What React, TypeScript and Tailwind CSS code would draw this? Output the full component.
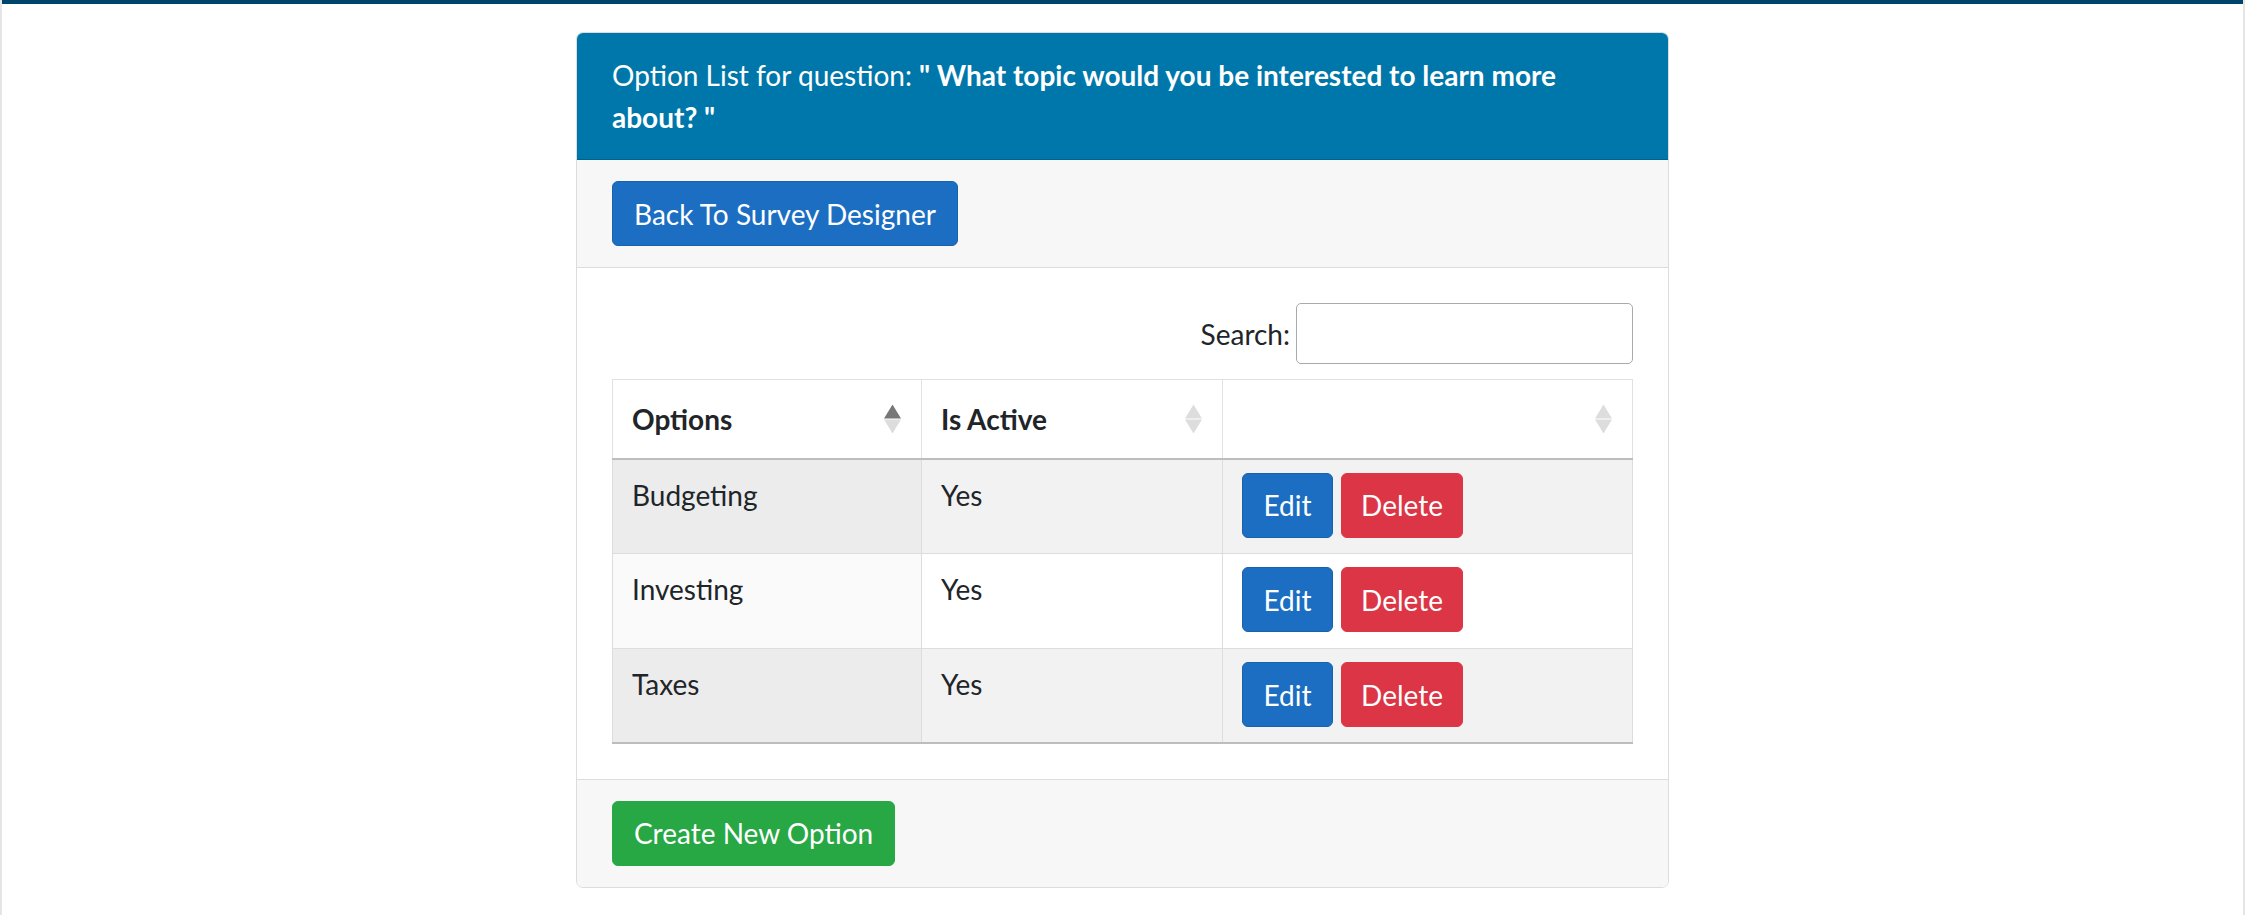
import React from 'react';

interface OptionRow {
  name: string;
  active: boolean;
}

const options: OptionRow[] = [
  { name: 'Budgeting', active: true },
  { name: 'Investing', active: true },
  { name: 'Taxes', active: true },
];

const SortIcon: React.FC<{ up?: boolean }> = ({ up }) => (
  <svg width="17" height="29" viewBox="0 0 17 29" className="absolute right-[20px] top-1/2 -translate-y-1/2">
    <path d="M8.5 0 L17 14 L0 14 Z" fill={up ? '#777777' : '#dddddd'} />
    <path d="M8.5 29 L17 15 L0 15 Z" fill="#dddddd" />
  </svg>
);

const App: React.FC = () => {
  return (
    <div className="min-h-[915px] bg-white text-[#212529] font-['Lato',sans-serif] text-[28px] leading-[42px] border-x-2 border-[#e5e5e5]">
      <div className="h-[4px] bg-[#00446e]" />

      <div className="mx-auto mt-[28px] w-[1093px] rounded-[7px] border border-[#dcdcdc] overflow-hidden">
        {/* Header */}
        <div className="bg-[#0077aa] text-white px-[35px] py-[21px] border-b border-[#00638f]">
          <span>Option List for question: </span>
          <b>" What topic would you be interested to learn more about? "</b>
        </div>

        {/* Top actions */}
        <div className="bg-[#f7f7f7] px-[35px] py-[21px] border-b border-[#dddddd]">
          <button className="h-[65px] px-[21px] rounded-[6px] bg-[#1b6ec2] border border-[#1861ac] text-white">
            Back To Survey Designer
          </button>
        </div>

        {/* Body */}
        <div className="bg-white p-[35px]">
          <div className="flex justify-end items-center">
            <label className="flex items-center">
              Search:
              <input className="ml-[6px] w-[337px] h-[61px] border border-[#aaaaaa] rounded-[5px] px-[8px] outline-none" />
            </label>
          </div>

          <table className="mt-[15px] w-full border-collapse">
            <thead>
              <tr className="h-[79px]">
                <th className="relative w-[309px] text-left font-bold pl-[19px] border border-[#dee2e6] border-b-2 border-b-[#bdbdbd]">
                  Options
                  <SortIcon up />
                </th>
                <th className="relative w-[301px] text-left font-bold pl-[19px] border border-[#dee2e6] border-b-2 border-b-[#bdbdbd]">
                  Is Active
                  <SortIcon />
                </th>
                <th className="relative text-left border border-[#dee2e6] border-b-2 border-b-[#bdbdbd]">
                  <SortIcon />
                </th>
              </tr>
            </thead>
            <tbody>
              {options.map((o, i) => {
                const odd = i % 2 === 0;
                const last = i === options.length - 1;
                return (
                  <tr key={o.name} className={last ? 'h-[94px]' : 'h-[95px]'}>
                    <td
                      className={`align-top pt-[14px] pl-[19px] border border-[#dddddd] ${odd ? 'bg-[#ececec]' : 'bg-[#fafafa]'} ${last ? 'border-b-2 border-b-[#bdbdbd]' : ''}`}
                    >
                      {o.name}
                    </td>
                    <td
                      className={`align-top pt-[14px] pl-[19px] border border-[#dddddd] ${odd ? 'bg-[#f2f2f2]' : 'bg-white'} ${last ? 'border-b-2 border-b-[#bdbdbd]' : ''}`}
                    >
                      {o.active ? 'Yes' : 'No'}
                    </td>
                    <td
                      className={`align-top pt-[13px] pl-[19px] border border-[#dddddd] ${odd ? 'bg-[#f2f2f2]' : 'bg-white'} ${last ? 'border-b-2 border-b-[#bdbdbd]' : ''}`}
                    >
                      <div className="flex gap-[8px]">
                        <button className="h-[65px] w-[91px] rounded-[6px] bg-[#1b6ec2] border border-[#1861ac] text-white">
                          Edit
                        </button>
                        <button className="h-[65px] w-[122px] rounded-[6px] bg-[#dc3545] border border-[#dc3545] text-white">
                          Delete
                        </button>
                      </div>
                    </td>
                  </tr>
                );
              })}
            </tbody>
          </table>
        </div>

        {/* Footer */}
        <div className="bg-[#f7f7f7] px-[35px] py-[21px] border-t border-[#dddddd]">
          <button className="h-[65px] px-[21px] rounded-[6px] bg-[#28a745] border border-[#28a745] text-white">
            Create New Option
          </button>
        </div>
      </div>
    </div>
  );
};

export default App;
